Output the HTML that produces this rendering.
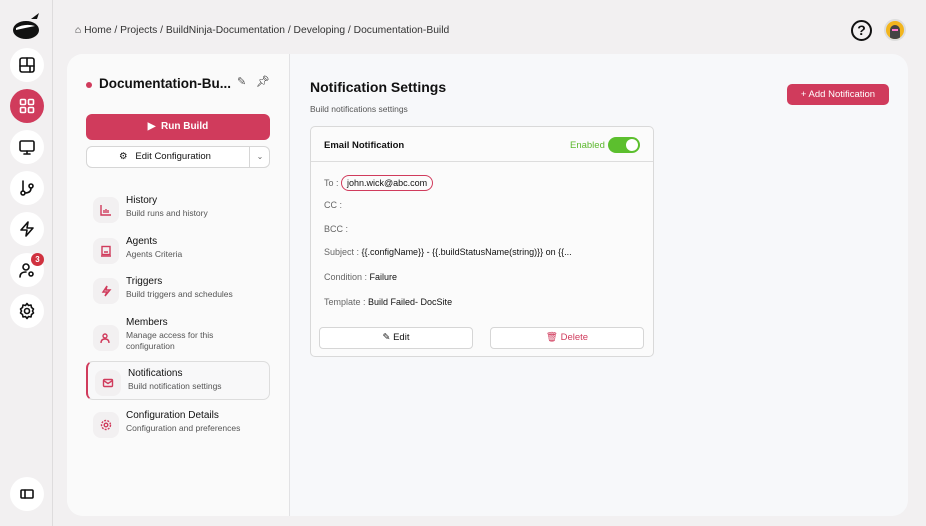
<!DOCTYPE html>
<html><head><meta charset="utf-8"><style>
*{box-sizing:border-box;margin:0;padding:0}
body{width:926px;height:526px;overflow:hidden;background:#f2f0f1;font-family:"Liberation Sans",sans-serif;position:relative;color:#111}
.side{position:absolute;left:0;top:0;width:53px;height:526px;background:#f2f0f1;border-right:1px solid #dedcdd}
.sb{position:absolute;left:10px;width:34px;height:34px;border-radius:50%;background:#fff;display:flex;align-items:center;justify-content:center}
.sb svg{width:18px;height:18px;fill:none;stroke:#111;stroke-width:1.6;stroke-linecap:round;stroke-linejoin:round}
.card{position:absolute;left:67px;top:54px;width:841px;height:462px;border-radius:16px;overflow:hidden;background:#f7f8fa}
.lp{position:absolute;left:0;top:0;width:223px;height:462px;background:#fafafa;border-right:1px solid #e2e2e4}
.crumb{position:absolute;left:75px;top:25px;font-size:10.3px;color:#333}
.nav{position:absolute;left:19px;width:183px;height:38px}
.nav .ic{position:absolute;left:7px;top:3px;width:26px;height:26px;border-radius:8px;background:#f2f0f1;display:flex;align-items:center;justify-content:center}
.nav .ic svg{width:12px;height:12px;fill:none;stroke:#d03b5c;stroke-width:1.4}
.nav b{position:absolute;left:40px;top:1px;font-weight:normal;font-size:10px;color:#111}
.nav i{position:absolute;left:40px;top:14px;font-style:normal;font-size:8.5px;color:#555;line-height:11px;width:115px}
.row{position:absolute;left:13px;font-size:9px;color:#111}
.row span{color:#666}
</style></head><body>
<div class="side">
 <svg style="position:absolute;left:11px;top:10px" width="32" height="32" viewBox="0 0 32 32"><ellipse cx="15" cy="20" rx="13" ry="9" fill="#111"/><path d="M20 9 L28 3 L26 9Z" fill="#111"/><path d="M5 18 Q14 13 24 16 Q14 18 5 20Z" fill="#fff"/></svg>
 <div class="sb" style="top:48px"><svg viewBox="0 0 18 18"><rect x="2" y="2" width="14" height="14" rx="2"/><path d="M2 10h14M9 2v8M12 10v6"/></svg></div>
 <div class="sb" style="top:89px;background:#d03b5c"><svg viewBox="0 0 18 18" style="stroke:#fff"><rect x="2.5" y="2.5" width="5" height="5" rx="1"/><rect x="10.5" y="2.5" width="5" height="5" rx="1"/><rect x="2.5" y="10.5" width="5" height="5" rx="1"/><rect x="10.5" y="10.5" width="5" height="5" rx="1"/></svg></div>
 <div class="sb" style="top:130px"><svg viewBox="0 0 18 18"><rect x="2" y="3" width="14" height="10" rx="1.5"/><path d="M9 13v3M6 16h6"/></svg></div>
 <div class="sb" style="top:171px"><svg viewBox="0 0 18 18"><circle cx="5" cy="14" r="2"/><circle cx="13" cy="7" r="2"/><path d="M5 2v10M13 9q0 5-6 5"/></svg></div>
 <div class="sb" style="top:212px"><svg viewBox="0 0 18 18"><path d="M10 2L3 10h6l-1 6 7-8H9z"/></svg></div>
 <div class="sb" style="top:253px"><svg viewBox="0 0 18 18"><circle cx="8" cy="6" r="3"/><path d="M2 16q0-5 6-5"/><circle cx="13" cy="13" r="2"/></svg></div>
 <div style="position:absolute;left:31px;top:253px;width:13px;height:13px;border-radius:50%;background:#d0313f;color:#fff;font-size:8px;font-weight:bold;text-align:center;line-height:13px">3</div>
 <div class="sb" style="top:294px"><svg viewBox="0 0 18 18"><circle cx="9" cy="9" r="2.5"/><path d="M9 1.5l1.5 2 2.5-.5.5 2.5 2 1.5-1 2 1 2-2 1.5-.5 2.5-2.5-.5L9 16.5l-1.5-2-2.5.5-.5-2.5-2-1.5 1-2-1-2 2-1.5.5-2.5 2.5.5z"/></svg></div>
 <div class="sb" style="top:477px"><svg viewBox="0 0 18 18"><rect x="3" y="5" width="12" height="8" rx="1"/><path d="M7 5v8"/></svg></div>
</div>
<div class="crumb">⌂ Home / Projects / BuildNinja-Documentation / Developing / Documentation-Build</div>
<div style="position:absolute;left:851px;top:20px;width:21px;height:21px;border:2px solid #111;border-radius:50%;text-align:center;font-size:14px;font-weight:bold;line-height:17px">?</div>
<div style="position:absolute;left:884px;top:19px;width:22px;height:22px;border-radius:50%;background:#f2b51d;border:2px solid #ddd;overflow:hidden"><div style="position:absolute;left:4px;top:4px;width:10px;height:16px;border-radius:5px 5px 2px 2px;background:#444"></div><div style="position:absolute;left:6px;top:8px;width:6px;height:2px;background:#f7c"></div></div>
<div class="card">
 <div class="lp">
  <div style="position:absolute;left:19px;top:28px;width:6px;height:6px;border-radius:50%;background:#d03b5c"></div>
  <div style="position:absolute;left:32px;top:22px;font-size:13.5px;font-weight:bold">Documentation-Bu...</div>
  <div style="position:absolute;left:170px;top:21px;font-size:11px;color:#555">✎</div>
  <div style="position:absolute;left:189px;top:21px;font-size:11px">📌︎</div>
  <div style="position:absolute;left:19px;top:60px;width:184px;height:26px;border-radius:6px;background:#d03b5c;color:#fff;font-size:10px;font-weight:bold;text-align:center;line-height:26px">▶&nbsp; Run Build</div>
  <div style="position:absolute;left:19px;top:92px;width:184px;height:22px;border-radius:6px;border:1px solid #d6d6d6;background:#fff;font-size:9.5px;line-height:20px"><span style="position:absolute;left:32px">⚙&nbsp;&nbsp;&nbsp;Edit Configuration</span><span style="position:absolute;left:162px;top:0;height:20px;border-left:1px solid #d6d6d6;width:21px;text-align:center;color:#666;font-size:8px">⌄</span></div>
  <div class="nav" style="top:140px"><div class="ic"><svg viewBox="0 0 12 12"><path d="M1 1v10h10M4 9V6M6 9V5M8 9V6"/></svg></div><b>History</b><i>Build runs and history</i></div>
  <div class="nav" style="top:181px"><div class="ic"><svg viewBox="0 0 12 12"><rect x="2" y="1.5" width="8" height="8"/><path d="M4 7h4M1 11h10"/></svg></div><b>Agents</b><i>Agents Criteria</i></div>
  <div class="nav" style="top:221px"><div class="ic"><svg viewBox="0 0 12 12"><path d="M7 1L3 7h4l-2 4 5-6H6z"/></svg></div><b>Triggers</b><i style="width:140px">Build triggers and schedules</i></div>
  <div class="nav" style="top:262px"><div class="ic" style="top:9px"><svg viewBox="0 0 12 12"><circle cx="5" cy="4" r="2"/><path d="M1 11q0-4 4-4t4 4"/></svg></div><b>Members</b><i>Manage access for this configuration</i></div>
  <div style="position:absolute;left:19px;top:307px;width:184px;height:39px;border:1px solid #ddd;border-left:2px solid #d03b5c;border-radius:7px;background:#f8f8f9"></div>
  <div class="nav" style="top:313px;left:21px"><div class="ic"><svg viewBox="0 0 12 12"><rect x="1.5" y="2.5" width="9" height="7" rx="1"/><path d="M1.5 3.5l4.5 3 4.5-3"/></svg></div><b>Notifications</b><i style="width:140px">Build notification settings</i></div>
  <div class="nav" style="top:355px"><div class="ic"><svg viewBox="0 0 12 12"><circle cx="6" cy="6" r="1.8"/><circle cx="6" cy="6" r="4.5" stroke-dasharray="2 1.2"/></svg></div><b>Configuration Details</b><i style="width:140px">Configuration and preferences</i></div>
 </div>
 <div style="position:absolute;left:243px;top:25px;font-size:14px;font-weight:bold">Notification Settings</div>
 <div style="position:absolute;left:243px;top:50px;font-size:8.5px;color:#555">Build notifications settings</div>
 <div style="position:absolute;left:720px;top:30px;width:102px;height:21px;border-radius:5px;background:#d03b5c;color:#fff;font-size:9.5px;text-align:center;line-height:21px">+ Add Notification</div>
 <div style="position:absolute;left:243px;top:72px;width:344px;height:231px;border:1px solid #d9d9d9;border-radius:5px;background:#fbfbfb">
  <div style="height:35px;border-bottom:1px solid #ddd;position:relative">
   <div style="position:absolute;left:13px;top:13px;font-size:9.5px;font-weight:bold">Email Notification</div>
   <div style="position:absolute;left:259px;top:13px;font-size:9.5px;color:#5cb82e">Enabled</div>
   <div style="position:absolute;left:297px;top:10px;width:32px;height:16px;border-radius:8px;background:#5cbf2e"><div style="position:absolute;right:2px;top:2px;width:12px;height:12px;border-radius:50%;background:#fff"></div></div>
  </div>
  <div class="row" style="top:48px"><span>To : </span><span style="display:inline-block;border:1px solid #d03b5c;border-radius:9px;padding:2px 5px;color:#111">john.wick@abc.com</span></div>
  <div class="row" style="top:73px"><span>CC :</span></div>
  <div class="row" style="top:97px"><span>BCC :</span></div>
  <div class="row" style="top:120px"><span>Subject : </span>{{.configName}} - {{.buildStatusName(string)}} on {{...</div>
  <div class="row" style="top:145px"><span>Condition : </span>Failure</div>
  <div class="row" style="top:170px"><span>Template : </span>Build Failed- DocSite</div>
  <div style="position:absolute;left:8px;top:200px;width:154px;height:22px;border:1px solid #d6d6d6;border-radius:4px;background:#fff;text-align:center;font-size:9.5px;line-height:20px">✎ Edit</div>
  <div style="position:absolute;left:179px;top:200px;width:154px;height:22px;border:1px solid #d6d6d6;border-radius:4px;background:#fff;text-align:center;font-size:9.5px;line-height:20px;color:#d03b5c">🗑︎ Delete</div>
 </div>
</div>
</body></html>
